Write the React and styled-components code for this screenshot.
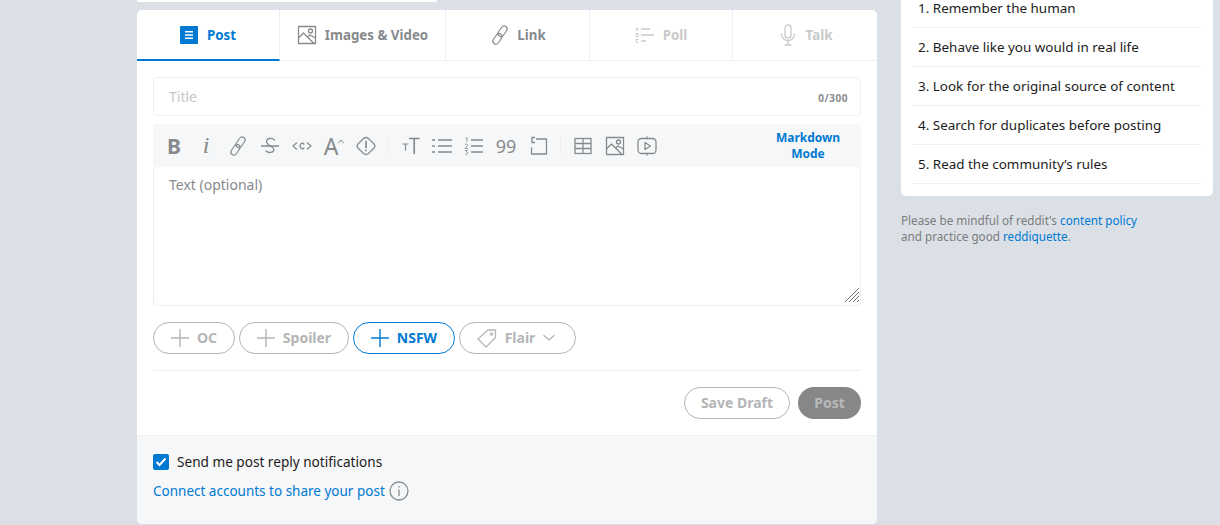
import React from "react";
import styled, { createGlobalStyle } from "styled-components";

const Global = createGlobalStyle`
  html, body { margin: 0; padding: 0; background: #dae0e6; overflow: hidden; }
  body { font-family: "Noto Sans", "Open Sans", Arial, sans-serif; }
  * { box-sizing: border-box; }
`;

const Page = styled.div`
  width: 1220px; height: 525px; overflow: hidden; display: flex; align-items: flex-start;
  padding-left: 137px; gap: 24px;
`;
const Main = styled.div`width: 740px; display: flex; flex-direction: column;`;
const TopSliver = styled.div`
  width: 300px; height: 2px; background: #fff; border-radius: 0 0 4px 4px; margin-bottom: 8px;
`;
const Card = styled.div`
  background: #fff; border-radius: 5px; height: 514px; display: flex; flex-direction: column; overflow: hidden;
`;
const Tabs = styled.div`display: flex; height: 51px; flex: none;`;
const Tab = styled.div`
  width: ${p => p.$w}px; display: flex; align-items: center; justify-content: center; gap: ${p => p.$gap ?? 8}px;
  font-size: 13.3px; font-weight: 700;
  color: ${p => (p.$active ? "#0079d3" : p.$off ? "#c9cacb" : "#878a8c")};
  border-bottom: ${p => (p.$active ? "2px solid #0079d3" : "1px solid #edeff1")};
  border-right: ${p => (p.$last ? "none" : "1px solid #edeff1")};
`;
const Label = styled.span`margin-bottom: 2px;`;
const Body = styled.div`padding: 16px 16px 0; display: flex; flex-direction: column; flex: 1;`;
const TitleBox = styled.div`
  height: 39px; border: 1px solid #edeff1; border-radius: 4px; display: flex; align-items: center;
  justify-content: space-between; padding: 0 12px 0 15px; margin-bottom: 8px;
`;
const Placeholder = styled.span`font-size: 14px; color: #c4c6c8;`;
const Counter = styled.span`font-size: 10px; font-weight: 700; color: #878a8c; letter-spacing: .55px; padding-top: 3px;`;
const Editor = styled.div`
  height: 182px; border: 1px solid #edeff1; border-radius: 4px; display: flex; flex-direction: column; position: relative;
`;
const Toolbar = styled.div`
  height: 43px; margin: -1px -1px 0; background: #f6f7f8; border-radius: 4px 4px 0 0; display: flex; align-items: center;
  padding-left: 5px; flex: none;
`;
const Tool = styled.div`
  width: 32px; height: 32px; display: flex; align-items: center; justify-content: center; flex: none; color: #878a8c;
  font-family: ${p => p.$serif ? '"Liberation Serif", serif' : '"Noto Sans", sans-serif'};
  font-size: ${p => p.$size ?? 20}px; font-weight: ${p => p.$bold ? 700 : 400}; font-style: ${p => p.$italic ? "italic" : "normal"};
`;
const Sep = styled.div`width: 1px; height: 17px; background: #edeff1; margin: 0 ${p => p.$mr ?? 5}px 0 6px; flex: none;`;
const Markdown = styled.div`
  margin-left: auto; width: 104px; text-align: center; font-size: 12px; font-weight: 700; line-height: 16px;
  color: #0079d3; margin-right: 1px; margin-top: 1px;
`;
const TextArea = styled.div`padding: 7px 15px; font-size: 14px; line-height: 21px; color: #878a8c;`;
const Grip = styled.svg`position: absolute; right: 0; bottom: 2px;`;
const Pills = styled.div`display: flex; gap: 4px; margin-top: 16px;`;
const Pill = styled.div`
  width: ${p => p.$w}px; height: 32px; border-radius: 16px; border: 1px solid ${p => p.$on ? "#0079d3" : "#b4b5b6"};
  color: ${p => p.$on ? "#0079d3" : "#b4b5b6"}; display: flex; align-items: center; justify-content: center; gap: ${p => p.$gap ?? 8}px;
  font-size: 14px; font-weight: 700; padding-right: ${p => p.$pr ?? 0}px;
`;
const Rule = styled.div`height: 1px; background: #edeff1; margin-top: 16px;`;
const Actions = styled.div`display: flex; justify-content: flex-end; gap: 8px; margin-top: 16px;`;
const SaveBtn = styled.div`
  width: 106px; height: 32px; border-radius: 16px; border: 1px solid #b4b5b6; color: #b4b5b6; padding-bottom: 2px;
  display: flex; align-items: center; justify-content: center; font-size: 14px; font-weight: 700;
`;
const PostBtn = styled.div`
  width: 63px; height: 32px; border-radius: 16px; background: #878787; color: #b9b9b9; padding-bottom: 2px;
  display: flex; align-items: center; justify-content: center; font-size: 14px; font-weight: 700;
`;
const Footer = styled.div`
  margin-top: auto; height: 89px; background: #f6f7f8; border-top: 1px solid #edeff1; padding: 18px 16px 0;
  display: flex; flex-direction: column; gap: 11px;
`;
const CheckRow = styled.div`display: flex; align-items: center; gap: 8px; font-size: 13.6px; color: #1c1c1c; height: 16px;`;
const CheckLabel = styled.span`margin-bottom: 2px;`;
const Check = styled.div`
  width: 16px; height: 16px; border-radius: 2px; background: #0079d3; display: flex; align-items: center; justify-content: center;
`;
const ConnectRow = styled.div`display: flex; align-items: center; gap: 4px; font-size: 13.5px; color: #0079d3; height: 20px;`;

const Side = styled.div`width: 312px; display: flex; flex-direction: column;`;
const RulesCard = styled.div`
  background: #fff; border-radius: 0 0 5px 5px; padding: 0 12px 12px 11px; height: 196px;
`;
const RuleRow = styled.div`
  height: ${p => p.$h ?? 39}px; border-bottom: 1px solid #edeff1; display: flex; align-items: ${p => p.$first ? "flex-end" : "center"};
  padding: ${p => p.$first ? "0 6px 10px" : "0 6px"}; font-size: 13.45px; color: #1c1c1c; white-space: nowrap;
`;
const Policy = styled.div`font-size: 11.7px; line-height: 16px; color: #7c7c7c; margin-top: 16px;`;
const A = styled.span`color: #0079d3;`;

const stroke = { fill: "none", stroke: "currentColor", strokeWidth: 1.3, strokeLinecap: "round", strokeLinejoin: "round" };

const LinkIcon = ({ s = 22 }) => (
  <svg width={s} height={s} viewBox="0 0 22 22" {...stroke} strokeWidth="1.150">
    <rect x="10.500" y="1.500" width="6" height="11.500" rx="3" transform="rotate(35 13.500 7.300)" />
    <rect x="5.500" y="9" width="6" height="11.500" rx="3" transform="rotate(35 8.500 14.700)" />
  </svg>
);
const ImageIcon = ({ s = 20 }) => (
  <svg width={s} height={s} viewBox="0 0 20 20" {...stroke} strokeLinecap="butt">
    <rect x="1.500" y="1.500" width="17" height="17" />
    <circle cx="13.500" cy="6" r="2" />
    <path d="M1.500 13 6.500 8 17 18.500" />
    <path d="M10.500 12 13 10l5.500 3" />
  </svg>
);
const PollIcon = () => (
  <svg width="20" height="20" viewBox="0 0 20 20" fill="none" stroke="currentColor">
    <path d="M6 4h9M6 10h13M6 16h5" strokeWidth="1.600" />
    <path d="M1 6l1.200-3.500L3.400 6M1 8.500h2.200v3H1zM3.400 14.500H1v3h2.400" strokeWidth=".9" />
  </svg>
);
const MicIcon = () => (
  <svg width="20" height="22" viewBox="0 0 20 22" {...stroke}>
    <rect x="7" y="1" width="6" height="13" rx="3" />
    <path d="M3.500 10c0 4 3 6.500 6.500 6.500s6.500-2.500 6.500-6.500M10 16.500V21M7 21h6" />
  </svg>
);
const Plus = () => (
  <svg width="18" height="18" viewBox="0 0 18 18" stroke="currentColor" strokeWidth="1.400"><path d="M9 0v18M0 9h18" /></svg>
);
const TagIcon = () => (
  <svg width="20" height="20" viewBox="0 0 20 20" {...stroke}>
    <path d="M1 11 11 2h7.500v7.500L9 19z" />
    <circle cx="14.500" cy="6" r="1.200" />
  </svg>
);

export default function App() {
  return (
    <Page>
      <Global />
      <Main>
        <TopSliver />
        <Card>
          <Tabs>
            <Tab $w={143} $active $gap={9}>
              <svg width="18" height="18" viewBox="0 0 18 18">
                <rect width="18" height="18" fill="#0079d3" rx="1" />
                <path d="M5 5h8v1.500H5zM5 8.300h8v1.500H5zM5 11.600h8v1.500H5z" fill="#fff" />
              </svg>
              <span>Post</span>
            </Tab>
            <Tab $w={166}><ImageIcon /><span>Images &amp; Video</span></Tab>
            <Tab $w={144} $gap={6}><LinkIcon /><span>Link</span></Tab>
            <Tab $w={143} $off><PollIcon /><span>Poll</span></Tab>
            <Tab $w={144} $off $last><MicIcon /><span>Talk</span></Tab>
          </Tabs>
          <Body>
            <TitleBox>
              <Placeholder>Title</Placeholder>
              <Counter>0/300</Counter>
            </TitleBox>
            <Editor>
              <Toolbar>
                <Tool $bold $size={21}>B</Tool>
                <Tool $serif $italic $size={24}>i</Tool>
                <Tool><LinkIcon /></Tool>
                <Tool>
                  <svg width="20" height="20" viewBox="0 0 20 20" {...stroke}>
                    <path d="M1.500 10h17" strokeWidth="1.500" />
                    <path d="M14.500 4c-1-1.300-3.200-1.800-5-1.500-2.200.4-3.500 2-2.800 4 .5 1.200 1.800 2.700 3.800 3.500 2 1 3.800 2.400 3.200 4.500-.7 2.300-5.200 2.800-7.700.5" />
                  </svg>
                </Tool>
                <Tool>
                  <svg width="20" height="20" viewBox="0 0 20 20" {...stroke}>
                    <path d="M4.500 7 1 10l3.500 3M15.500 7 19 10l-3.500 3M12 8c-1-1.200-4-1-4 2s3 3.200 4 2" />
                  </svg>
                </Tool>
                <Tool $size={23}><span>A</span><svg width="6" height="16" viewBox="0 0 6 16" {...stroke} strokeWidth="1"><path d="M.5 5 3 2l2.500 3" /></svg></Tool>
                <Tool>
                  <svg width="20" height="20" viewBox="0 0 20 20" {...stroke}>
                    <path d="M7.500 2.500Q10 .5 12.500 2.500L18 8Q19.800 10 18 12L12.500 17.500Q10 19.500 7.500 17.500L2 12Q.2 10 2 8Z" />
                    <path d="M10 5.500v6M10 14v.5" strokeWidth="1.700" />
                  </svg>
                </Tool>
                <Sep />
                <Tool>
                  <svg width="20" height="20" viewBox="0 0 20 20" fill="none" stroke="currentColor" strokeWidth="1.500">
                    <path d="M9 2.500h10.500M14.200 2.500V18" strokeWidth="1.700" />
                    <path d="M2.500 8h6M5.500 8v6.500" strokeWidth="1.200" />
                  </svg>
                </Tool>
                <Tool>
                  <svg width="20" height="20" viewBox="0 0 20 20" fill="none" stroke="currentColor" strokeWidth="1.600">
                    <path d="M6 4h14M6 10h14M6 16h14M0 4h3M0 10h3M0 16h3" />
                  </svg>
                </Tool>
                <Tool>
                  <svg width="20" height="20" viewBox="0 0 20 20" fill="none" stroke="currentColor" strokeWidth="1.600">
                    <path d="M7 4h12M7 10h12M7 16h12" />
                    <path d="M1.500 2.500 3 1.500V6M1 8.500c1-1 3-.5 2.500 1L1 12.500h3M1 14.500h2.500L2 16c1.500 0 2 .8 1.500 2-.5.800-2 .8-2.500 0" strokeWidth=".8" />
                  </svg>
                </Tool>
                <Tool $size={18}>99</Tool>
                <Tool>
                  <svg width="20" height="20" viewBox="0 0 20 20" {...stroke} strokeLinecap="butt">
                    <path d="M8 3h10.500v15H3.500V11.500" />
                    <path d="M7 1.500H4v5h3" />
                  </svg>
                </Tool>
                <Sep $mr={6} />
                <Tool>
                  <svg width="20" height="20" viewBox="0 0 20 20" fill="none" stroke="currentColor" strokeWidth="1.300">
                    <rect x="2" y="2.500" width="16" height="15" />
                    <path d="M2 7.500h16M2 12.500h16M10 2.500v15" />
                  </svg>
                </Tool>
                <Tool><ImageIcon /></Tool>
                <Tool>
                  <svg width="20" height="20" viewBox="0 0 20 20" {...stroke}>
                    <rect x="1" y="2.500" width="18" height="15" rx="3.500" />
                    <path d="M8 6.500 13.500 10 8 13.500z" />
                    <path d="M10 1v1.500M10 17.500V19" />
                  </svg>
                </Tool>
                <Markdown>Markdown<br />Mode</Markdown>
              </Toolbar>
              <TextArea>Text (optional)</TextArea>
              <Grip width="16" height="16" viewBox="0 0 16 16" stroke="#6f7173" strokeWidth="1">
                <path d="M1 15 15 1M5 15 15 5M9 15l6-6M13 15l2-2" />
              </Grip>
            </Editor>
            <Pills>
              <Pill $w={82}><Plus /><Label>OC</Label></Pill>
              <Pill $w={110}><Plus /><Label>Spoiler</Label></Pill>
              <Pill $w={102} $on><Plus /><Label>NSFW</Label></Pill>
              <Pill $w={117} $pr={3}>
                <TagIcon /><Label>Flair</Label>
                <svg width="12" height="8" viewBox="0 0 12 8" {...stroke}><path d="M1 1.500 6 6l5-4.500" /></svg>
              </Pill>
            </Pills>
            <Rule />
            <Actions>
              <SaveBtn>Save Draft</SaveBtn>
              <PostBtn>Post</PostBtn>
            </Actions>
          </Body>
          <Footer>
            <CheckRow>
              <Check>
                <svg width="12" height="10" viewBox="0 0 12 10" fill="none" stroke="#fff" strokeWidth="2"><path d="M1.500 5 4.500 8 10.500 1.500" /></svg>
              </Check>
              <CheckLabel>Send me post reply notifications</CheckLabel>
            </CheckRow>
            <ConnectRow>
              Connect accounts to share your post
              <svg width="20" height="20" viewBox="0 0 20 20" fill="none" stroke="#878a8c" strokeWidth="1.300">
                <circle cx="10" cy="10" r="9" />
                <path d="M10 8.500v6.500M10 5v1.500" />
              </svg>
            </ConnectRow>
          </Footer>
        </Card>
      </Main>
      <Side>
        <RulesCard>
          <RuleRow $first $h={28}>1. Remember the human</RuleRow>
          <RuleRow>2. Behave like you would in real life</RuleRow>
          <RuleRow>3. Look for the original source of content</RuleRow>
          <RuleRow>4. Search for duplicates before posting</RuleRow>
          <RuleRow>5. Read the community’s rules</RuleRow>
        </RulesCard>
        <Policy>
          Please be mindful of reddit's <A>content policy</A><br />
          and practice good <A>reddiquette</A>.
        </Policy>
      </Side>
    </Page>
  );
}
